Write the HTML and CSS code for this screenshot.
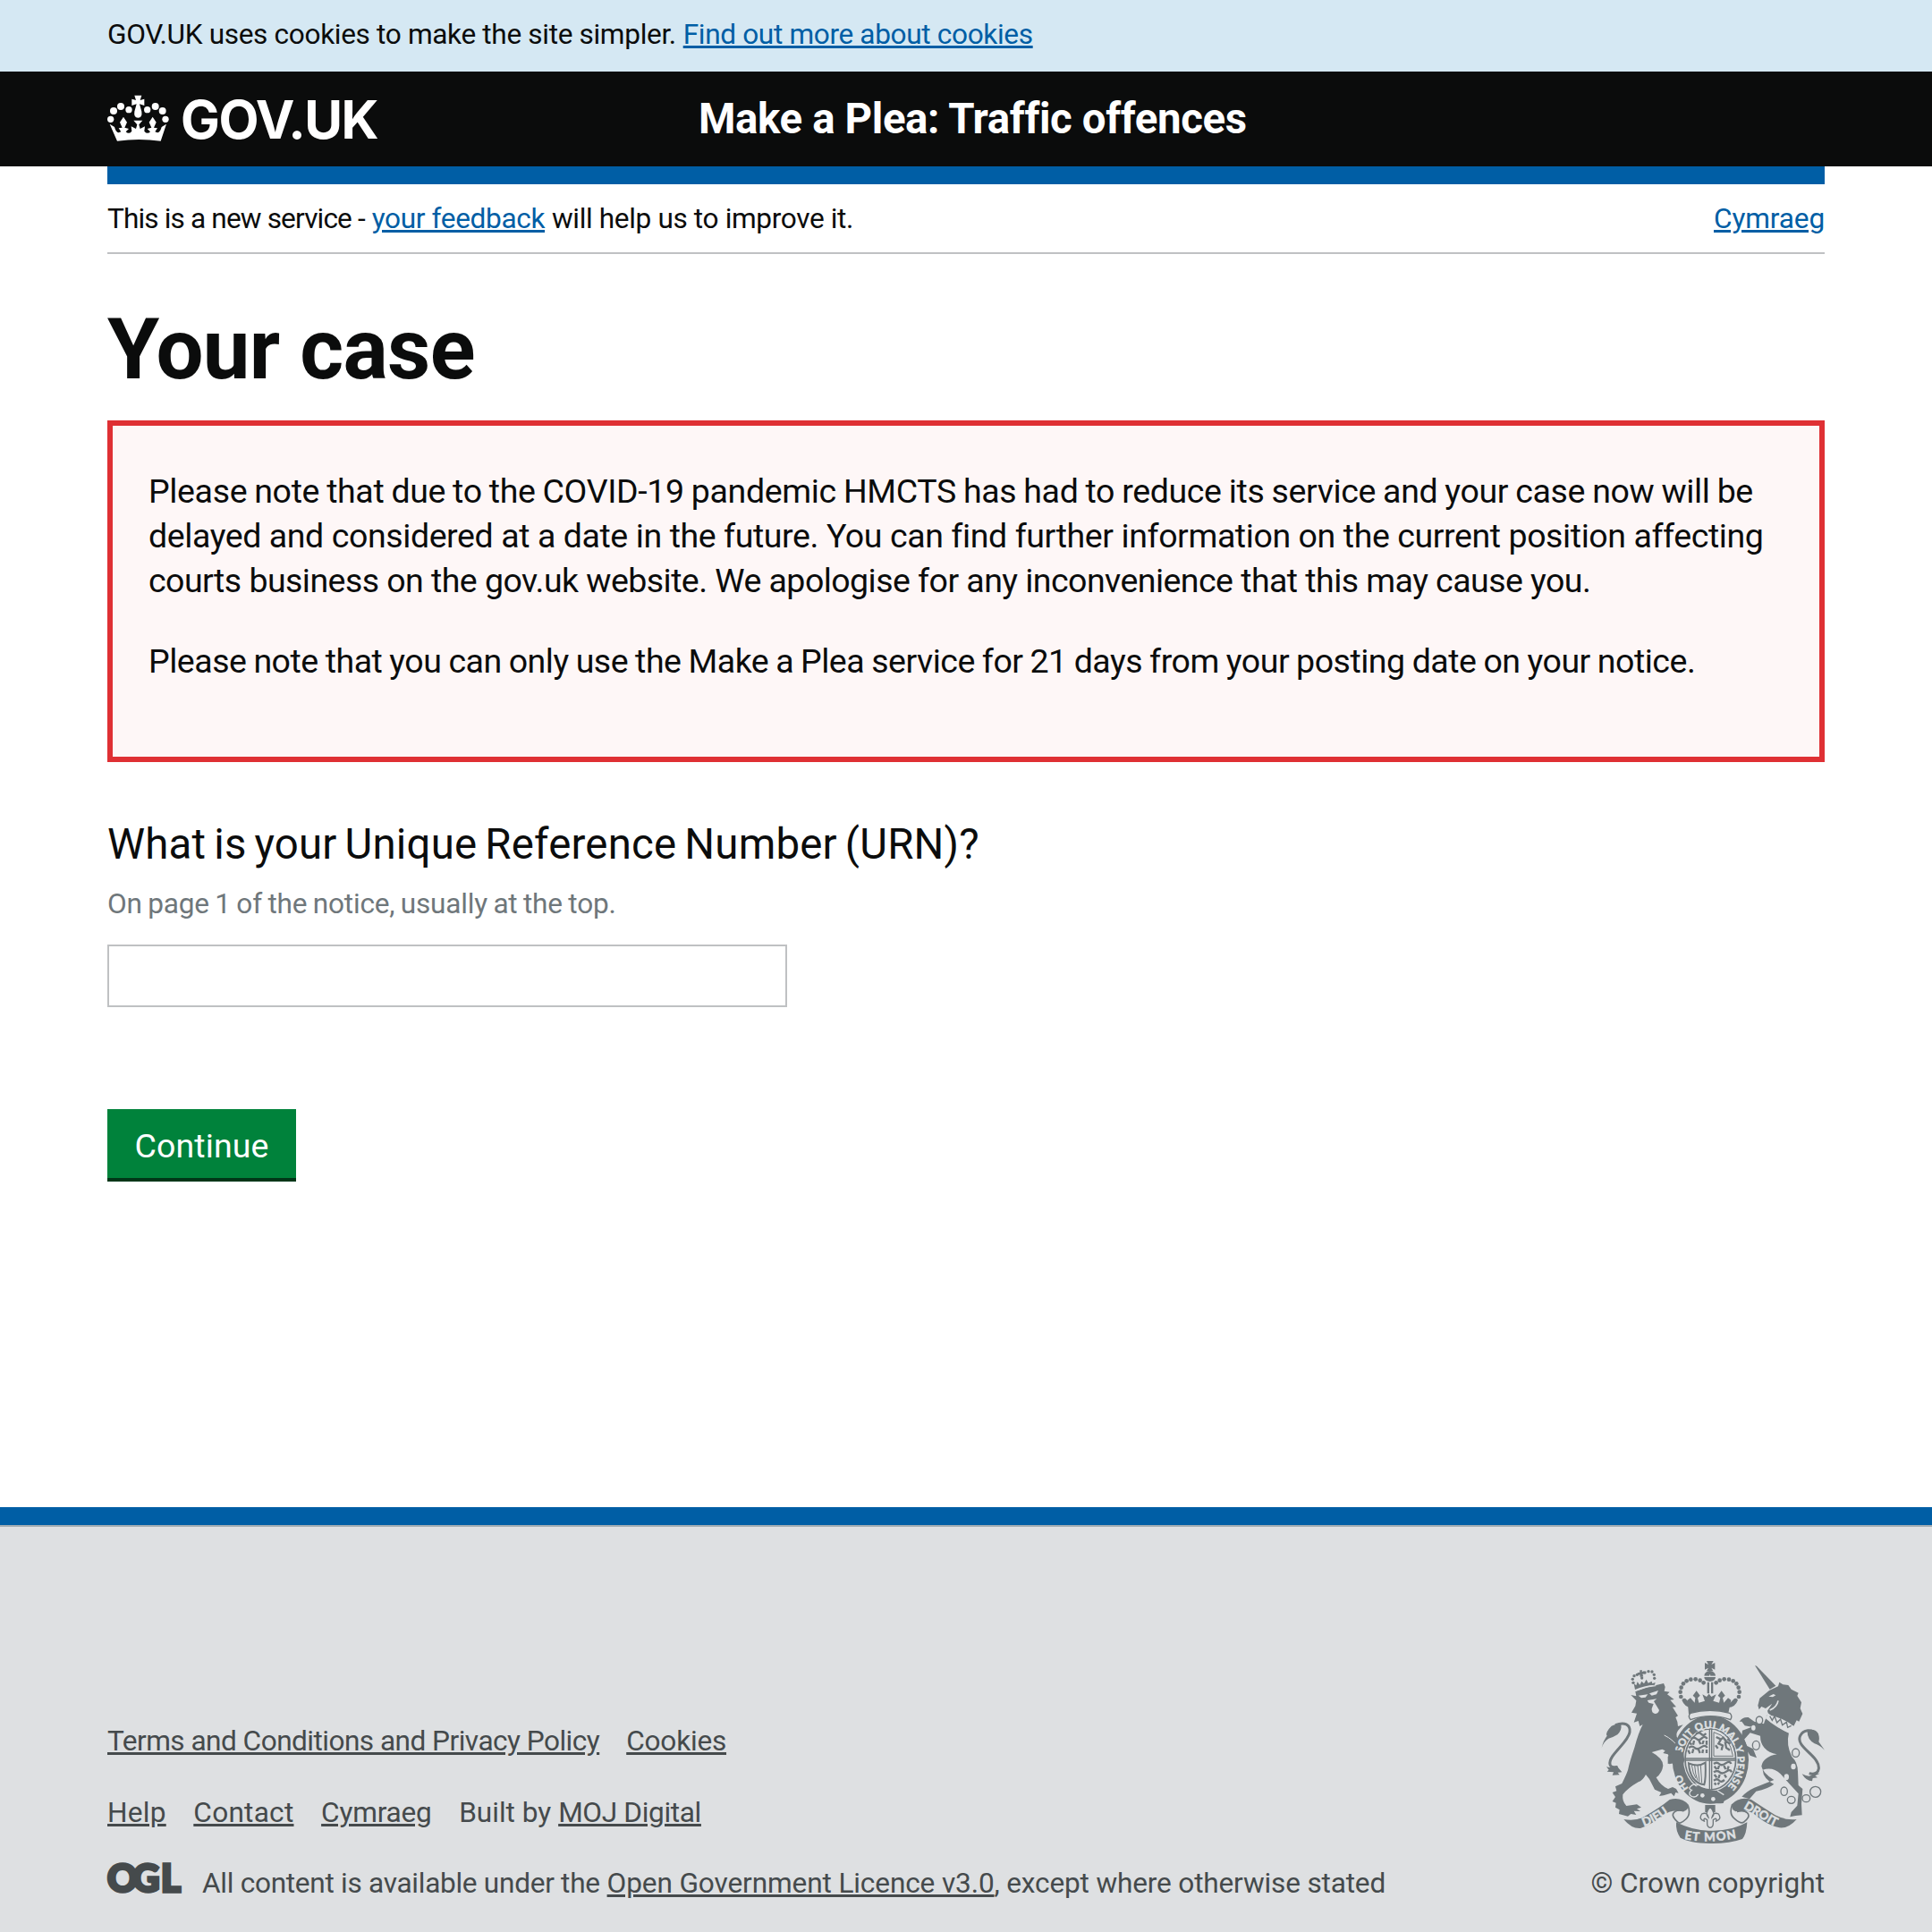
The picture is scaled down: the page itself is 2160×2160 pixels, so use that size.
FILE: index.html
```html
<!DOCTYPE html>
<html lang="en">
<head>
<meta charset="utf-8">
<title>Your case - Make a Plea: Traffic offences</title>
<link rel="stylesheet" href="styles.css">
</head>
<body>
<div class="cookie-bar"><p class="wrap"><span class="t-cookie">GOV.UK uses cookies to make the site simpler.</span> <a class="t-more" href="#">Find out more about cookies</a></p></div>

<header class="header">
  <div class="wrap header-inner">
    <a class="logo" href="#">
      <svg class="crown" viewBox="0 0 207 156" aria-hidden="true">
        <g fill="#fff">
          <path d="M91 2h24l-5 16 14-4v22l-16-5 7 25q3 20-12 21-15-1-12-21l7-25-16 5V14l14 4z"/>
          <circle cx="11" cy="82" r="11"/><circle cx="21" cy="54" r="12"/><circle cx="45" cy="39" r="12"/><circle cx="72" cy="50" r="11"/>
          <circle cx="195" cy="82" r="11"/><circle cx="185" cy="54" r="12"/><circle cx="161" cy="39" r="12"/><circle cx="134" cy="50" r="11"/>
          <path d="M8 98l16 10 2 6q6 18 20 10l-8-12 12-2-8-18 12-18 12 18-8 18 14 4-10 10q10 10 20-2l-2-16 16 8 4-14-12-14h30l-12 14 4 14 16-8-2 16q10 12 20 2l-10-10 14-4-8-18 12-18 12 18-8 18 12 2-8 12q14 8 20-10l2-6 16-10-19 57q-73-10-146 0z"/>
        </g>
      </svg>
      <span class="logo-text">GOV.UK</span>
    </a>
    <span class="service-name">Make a Plea: Traffic offences</span>
  </div>
</header>

<main class="wrap main">
  <div class="phase-banner">
    <p><span class="t-new">This is a new service -</span> <a class="t-feedback" href="#">your feedback</a> <span class="t-help">will help us to improve it.</span></p>
    <a class="t-cymraeg" href="#">Cymraeg</a>
  </div>
  <h1>Your case</h1>
  <section class="notice">
    <p><span class="n1">Please note that due to the COVID-19 pandemic HMCTS has had to reduce its service and your case now will be</span> <span class="n2">delayed and considered at a date in the future. You can find further information on the current position affecting</span> <span class="n3">courts business on the gov.uk website. We apologise for any inconvenience that this may cause you.</span></p>
    <p class="n4">Please note that you can only use the Make a Plea service for 21 days from your posting date on your notice.</p>
  </section>
  <form class="form">
    <label for="urn">What is your Unique Reference Number (URN)?</label>
    <span class="hint">On page 1 of the notice, usually at the top.</span>
    <input id="urn" type="text">
    <button type="button">Continue</button>
  </form>
</main>

<footer class="footer">
  <div class="wrap footer-inner">
    <div class="footer-links">
      <p class="link-row"><a class="t-terms" href="#">Terms and Conditions and Privacy Policy</a><a class="t-neg" href="#">Cookies</a></p>
      <p class="link-row"><a class="t-pos" href="#">Help</a><a class="t-pos" href="#">Contact</a><a class="t-neg" href="#">Cymraeg</a><span>Built by <a class="t-moj" href="#">MOJ Digital</a></span></p>
      <p class="licence">
        <svg class="ogl" viewBox="0 0 82 34" aria-label="OGL"><text y="31.4"><tspan x="0">O</tspan><tspan x="28">G</tspan><tspan x="60">L</tspan></text></svg>
        <span><span class="t-all">All content is available under the</span> <a class="t-open" href="#">Open Government Licence v3.0</a><span class="t-except">, except where otherwise stated</span></span>
      </p>
    </div>
    <div class="copyright">
      <svg class="arms" viewBox="60 48 750 618" aria-hidden="true">
        <defs>
          <path id="garter" d="M356 466A94 111 0 1 1 480 476"/>
          <path id="honi" d="M354 478Q326 446 326 404"/>
          <path id="dieu" d="M204 606Q255 590 306 544"/>
          <path id="mon" d="M339 648Q425 664 516 644"/>
          <path id="droit" d="M537 544Q590 575 622 594T680 608"/>
        </defs>
        <!-- lion -->
        <g class="ink">
          <path d="M160 165l18 4-3-16q45-17 95-27l5 12-3 14 18 3-8 8 23 17-13 2 20 23-12 1 18 29-8 5q8 15 8 30l17-5-13 15q-12 12-8 25 18 25 24 75l-6 25-13-5-7 12-12-18-12 3 4-17-8-16-16-4 7-8-10-5-35 10q38 20 38 45-3 25-23 40 17 30 40 38l15-6 12 6 8 14-10-2-5 13-10-11-25 8-15 2 7-12-22-10-18-35-12-15q-10 20-25 25-35 20-52 42-3 23 12 38l35-5 15 10-15 5 12 8-22-1 8 13-18-3-10 8-30-8 2-14-14-8 2-15-12-5 10-15-10-15 14-5-4-15 22-10q15-30 20-45 5-25 22-75 13-50 28-78l-10 6-5-18-15 5 10-30-18-3 13-22 3-18z"/>
          <path d="M62 342q6-25 18-40-8-10 15-33 14-8 32-5 4 18-12 34-12 8-30 13-16 10-23 31z"/>
          <path d="M78 406q18 6 34-4l18 22-14 1 6 8-24 1 4-10-22-2 6-6z"/>
          <path d="M174 147l-4-20 8 6 4-12 8 10 6-12 8 8 8-14 6 12 12-6 2 8 10-4-2 8q-36 2-66 16z"/>
          <path d="M190 82h8l-1 6 7-3 2 9-7 1 3 8-11 2-1-8-7 3-1-9 8-2z"/>
          <circle cx="168" cy="124" r="5"/><circle cx="166" cy="112" r="5"/><circle cx="171" cy="101" r="5"/><circle cx="181" cy="97" r="5"/><circle cx="207" cy="90" r="5"/><circle cx="219" cy="86" r="5"/><circle cx="231" cy="87" r="5"/><circle cx="238" cy="97" r="5"/><circle cx="239" cy="109" r="5"/><circle cx="197" cy="108" r="5"/>
        </g>
        <path class="line" stroke-width="9" d="M108 266c30-12 52-2 48 24-6 36-72 76-66 108 1 8 12 12 26 8"/>
        <path class="paper" d="M185 167l32-4-8 10-14 2zM222 160l30-10-6 13-16 4zM215 183l32-5-10 8 18 30q-3 12-14 12-12-2-11-17l6-16-16-4z"/>
        <path class="line light" stroke-width="3" d="M176 151q34-16 68-17M272 300q30 14 52 46"/>
        <!-- crown -->
        <g class="ink">
          <path d="M414 51h23l-7 12 12-6v23l-12-6 6 11h-22l6-11-12 6V57l12 6z"/>
          <path d="M406 101a19 17 0 0 1 38 0zM406 105h38a19 15 0 0 1-38 0z"/>
          <path d="M416 122h7v38h-7zM429 122h7v38h-7z"/>
          <path d="M350 182l10-7 14 16 2-16-8-8 12-16 12 16-8 8 4 16 20-6-8-22 14 8 8-10 8 10 16-8-10 22 20 6 4-16-8-8 12-16 12 16-8 8 4 16 14-16 10 7-10 48q-70-24-132 0z"/>
          <circle cx="328" cy="171" r="7"/><circle cx="326" cy="155" r="7"/><circle cx="329" cy="140" r="7"/><circle cx="336" cy="127" r="7"/><circle cx="347" cy="118" r="7"/><circle cx="361" cy="113" r="7"/><circle cx="377" cy="112" r="7"/><circle cx="392" cy="116" r="7"/><circle cx="404" cy="124" r="7"/>
          <circle cx="522" cy="171" r="7"/><circle cx="524" cy="155" r="7"/><circle cx="521" cy="140" r="7"/><circle cx="514" cy="127" r="7"/><circle cx="503" cy="118" r="7"/><circle cx="489" cy="113" r="7"/><circle cx="473" cy="112" r="7"/><circle cx="458" cy="116" r="7"/><circle cx="446" cy="124" r="7"/>
          <path d="M331 182q4-8 12-5l14 14 6 16q-22 0-32-25zM519 182q-4-8-12-5l-14 14-6 16q22 0 32-25z"/>
        </g>
        <path class="line light" stroke-width="3" d="M425 97v8M404 103h42"/>
        <!-- garter and shield -->
        <ellipse class="ink" cx="427" cy="382" rx="128" ry="148"/>
        <path class="paper line-edge" d="M360 226q65-18 132 0 10 10 2 22-66-24-134 0-10-12 0-22z"/>
        <ellipse class="paper" cx="427" cy="381" rx="91" ry="108"/>
        <ellipse class="line" stroke-width="5" cx="427" cy="381" rx="85" ry="102"/>
        <path class="line" stroke-width="4" d="M342 378h170M342 384h170M424 278v204M431 278v204"/>
        <g class="line" stroke-width="7">
          <path d="M362 312q10-8 18 0t18-2 18 2M356 324l8 8M372 318l-3 14M388 318l6 12M404 318l-4 12M414 318v14M354 342q12-8 20 0t22-2 20 2M352 350l6 12M370 346l-4 14M386 346l6 14M402 348l-2 12M414 348v12M378 296q10-8 18 0t16-2"/>
          <path d="M438 396q10-8 18 0t22-2 18 2M440 404l8 10M456 402l-4 12M472 402l6 12M488 404l-4 12M438 424q12-8 20 0t22-2 18 2M440 432l8 10M458 432l-4 12M474 432l6 10M438 452q12-8 18 0t18-2M440 460l6 6M456 458l-4 8"/>
          <path d="M446 306l16 8 8-6 10 14 14 6M462 314l-8 14 14 6-4 16M476 322l4 20 12 8M444 334l8 10M484 312l10 8"/>
        </g>
        <path class="line" stroke-width="3" d="M438 290v80h66M438 290q54 14 64 78"/>
        <path class="line" stroke-width="6" d="M354 394q4 64 52 72 6-20 4-74-24 16-56 2z"/>
        <path class="line" stroke-width="3" d="M364 400q4 30 14 44M374 402q2 30 10 50M384 402l6 54M394 402l4 58"/>
        <g class="motto garter-text">
          <text><textPath href="#honi">HO</textPath></text>
          <text><textPath href="#garter" startOffset="112" textLength="386" lengthAdjust="spacing">SOIT QUI MAL Y PENSE</textPath></text>
        </g>
        <path class="ink" d="M362 478l24-8q42 22 100 14l-16 44q-60 6-100-26z"/>
        <path class="line light" stroke-width="4" d="M386 468q-14-8-24 2-12 10 2 14-14 12-2 20 14 8 24-6M450 486l22 14"/>
        <circle class="paper" cx="400" cy="502" r="7"/><circle class="paper" cx="436" cy="514" r="7"/>
        <path class="ink" d="M284 372q30-40 52-10l4 22-8 22-12-10-8 12-14-14-14 2z"/>
        <!-- unicorn -->
        <g class="ink">
          <path d="M576 66l6 2 64 66-20 12z"/>
          <path d="M624 150l30-14 4-14 12 8 18 2 10 14 24 12-4 10 14 22-4 20 8 18-12 26-8-4-10 20q-34-28-84-38l-4-14 16-24-22 16-14-6-8 10-4-14 6-24z"/>
          <path d="M614 236q44 44 76 56-10 40 10 80 20 20 20 50l2 46 14 12-4 50 2 38-22 2-18 4 4-16 20-22 4-40q-32-34-60-66-26-26-60-14 2 30 38 48-20 16-60 24l-22 26-26-8q16-18 42-30l66-26q-38-24-42-46 6-32 52-40-56-12-56-62l-34-10-20 22 10 22 20 10 12 30-22-8-16-26-14-26 4-32 32-12-24-4-10-14-8 0q10-16 30-14l20 14 32 8q6-24 24-44z"/>
          <path d="M752 284q24-8 36 10 6 14 2 28l20 28q-18-18-34-22-26-14-24-44z"/>
          <path d="M734 430q28 14 36 0l24-2-16 8 8 6-16 2-2 10q-20 0-34-24z"/>
        </g>
        <path class="line" stroke-width="9" d="M786 300c-20-24-48-18-58 2-18 38 66 66 62 110-2 16-16 20-32 16"/>
        <path class="paper" d="M620 226q40 34 90 44l-14 26q-50-22-84-52zM622 170l16-8 8 4-10 6z"/>
        <path class="line" stroke-width="4" d="M626 236l8 14 8-14 8 22 12-12 6 20 14-10 4 18 12-6"/>
        <path class="line light" stroke-width="5" d="M626 216q24-10 28-32"/>
        <g class="line" stroke-width="4">
          <ellipse class="paper line-edge" cx="591" cy="250" rx="11" ry="13"/><ellipse class="paper line-edge" cx="580" cy="334" rx="12" ry="15"/><ellipse class="paper line-edge" cx="713" cy="359" rx="12" ry="14"/>
          <ellipse cx="674" cy="488" rx="11" ry="14"/><ellipse cx="698" cy="517" rx="13" ry="12"/><ellipse cx="748" cy="512" rx="13" ry="12"/><circle cx="779" cy="490" r="18"/>
        </g>
        <ellipse class="paper" cx="705" cy="405" rx="8" ry="10"/><ellipse class="paper" cx="682" cy="440" rx="8" ry="10"/><ellipse class="paper" cx="571" cy="275" rx="7" ry="9"/>
        <!-- ribbon and fleur-de-lis -->
        <g class="ink">
          <path d="M136 582q40 8 70-10 50-28 84-56 40-10 64 18-2 20-20 22-40-8-66 14-40 30-76 42-30 2-56-30z"/>
          <path d="M716 582q-40 4-72-14-44-28-80-52-40-12-66 16 0 20 14 24 40-10 66 12 40 34 80 42 30 4 58-28z"/>
          <path d="M312 592q60 30 116 28 70 2 122-28-2 40-16 56-44 16-108 15-70-2-100-19-16-22-14-52z"/>
          <path d="M409 534h34v24h-34z"/>
        </g>
        <path class="line" stroke-width="5" d="M352 536q10 30-8 46-20 18-26 10-28-24-10-36 12-8 30-2M500 532q-12 34 8 48 20 18 30 12 26-20 12-32-10-10-34-4"/>
        <path class="paper line-edge" d="M426 540q20 24 6 36 4-20 22-12 12 18-8 24 4-14-10-4v12q0 12-10 14-10-2-10-14v-12q-14-10-10 4-20-6-8-24 18-8 22 12-14-12 6-36z"/>
        <g class="motto">
          <text><textPath href="#dieu">DIEU</textPath></text>
          <text><textPath href="#mon" textLength="176">ET MON</textPath></text>
          <text><textPath href="#droit">DROIT</textPath></text>
        </g>
      </svg>
      <a class="t-copy" href="#">© Crown copyright</a>
    </div>
  </div>
</footer>
</body>
</html>
```
FILE: styles.css
```css
* { box-sizing: border-box; }
body {
  margin: 0;
  min-height: 2160px;
  overflow: hidden;
  background: #fff;
  color: #0b0c0c;
  font: 31.6px/40px Roboto, "Liberation Sans", sans-serif;
}
p, h1 { margin: 0; }
a { color: #005ea5; text-decoration: underline; text-decoration-thickness: 3px; text-underline-offset: 2px; }
.wrap { width: 1920px; margin: 0 auto; }

.cookie-bar { height: 80px; padding-top: 19px; background: #d5e8f3; }
.t-cookie { letter-spacing: -0.34px; }
.t-more { letter-spacing: -0.35px; }

.header { height: 106px; background: #0b0c0c; }
.header-inner { display: grid; grid-template-columns: 661px 1fr; height: 100%; }
.logo { display: flex; gap: 13px; padding-top: 26px; color: #fff; text-decoration: none; }
.crown { width: 69px; height: 52px; }
.logo-text { font: 700 58.5px/56px Inter, sans-serif; letter-spacing: -1.5px; }
.service-name { padding-top: 23px; color: #fff; font-size: 47.4px; font-weight: 700; line-height: 60px; letter-spacing: -0.38px; }

.main { height: 1499px; border-top: 20px solid #005ea5; }
.phase-banner { display: flex; justify-content: space-between; padding: 19px 0 17px; border-bottom: 2px solid #bfc1c3; }
.t-new { letter-spacing: -0.86px; }
.t-feedback { letter-spacing: -0.36px; }
.t-help { letter-spacing: -0.36px; }
.t-cymraeg { letter-spacing: -0.14px; }

h1 { margin: 57px 0 29px; font-size: 94px; line-height: 100px; letter-spacing: -0.7px; }

.notice { padding: 48px 40px 42px; border: 6px solid #df3034; background: #fef7f7; font-size: 37.5px; line-height: 50px; }
.notice p { margin-bottom: 40px; }
.notice p:last-child { margin-bottom: 40px; }
.n1 { letter-spacing: -0.35px; word-spacing: -0.9px; }
.n2 { letter-spacing: -0.41px; }
.n3 { letter-spacing: -0.55px; }
.n4 { letter-spacing: -0.48px; word-spacing: -0.85px; }

.form { display: flex; flex-direction: column; align-items: flex-start; margin-top: 67px; }
.form label { font-size: 47.4px; line-height: 50px; letter-spacing: 0.2px; word-spacing: -3px; }
.hint { margin: 22px 0 25px; color: #6f777b; letter-spacing: -0.22px; word-spacing: -1.1px; }
.form input { width: 760px; height: 70px; padding: 8px; border: 2px solid #bfc1c3; background: #fff; font: inherit; }
.form button {
  width: 211px; height: 77px; margin-top: 114px; padding: 5px 0 0; border: 0;
  background: #00823b; box-shadow: 0 4px 0 #003618; color: #fff;
  font: 37.5px/50px Roboto, sans-serif; letter-spacing: 0.1px;
}

.footer { height: 475px; border-top: 20px solid #005ea5; background: #dee0e2; color: #454a4c; }
.footer::before { content: ""; display: block; height: 2px; background: #a1acb2; }
.footer a { color: inherit; }
.footer-inner { display: flex; justify-content: space-between; padding-top: 149px; }
.footer-links { padding-top: 71px; }
.link-row { display: flex; gap: 30px; margin-bottom: 40px; }
.link-row + .link-row { gap: 30.6px; }
.licence { display: flex; gap: 24px; margin-top: -1px; }
.ogl {
  width: 82px; height: 34px; margin-top: -2px; overflow: visible;
  fill: #454a4c; stroke: #454a4c; stroke-width: 3.4px; font: 900 42px Lato, sans-serif;
}
.t-terms { letter-spacing: -0.53px; }
.t-neg { letter-spacing: -0.22px; }
.t-pos { letter-spacing: 0.25px; }
.t-moj { letter-spacing: -0.35px; }
.t-all { letter-spacing: -0.29px; }
.t-open { letter-spacing: -0.13px; }
.t-except { letter-spacing: -0.17px; }

.copyright { display: flex; flex-direction: column; align-items: flex-end; }
.arms { width: 250px; height: 206px; margin-bottom: 24px; }
.footer .t-copy { text-decoration: none; }
.ink { fill: #6f777b; }
.paper { fill: #dee0e2; }
.line { fill: none; stroke: #6f777b; }
.line .paper { fill: #dee0e2; }
.light { stroke: #dee0e2; }
.line-edge { stroke: #6f777b; stroke-width: 4px; }
.motto { fill: #dee0e2; stroke: #dee0e2; stroke-width: 1.6px; font: 700 40px Lato, sans-serif; }
.garter-text { font-size: 34px; }
```
